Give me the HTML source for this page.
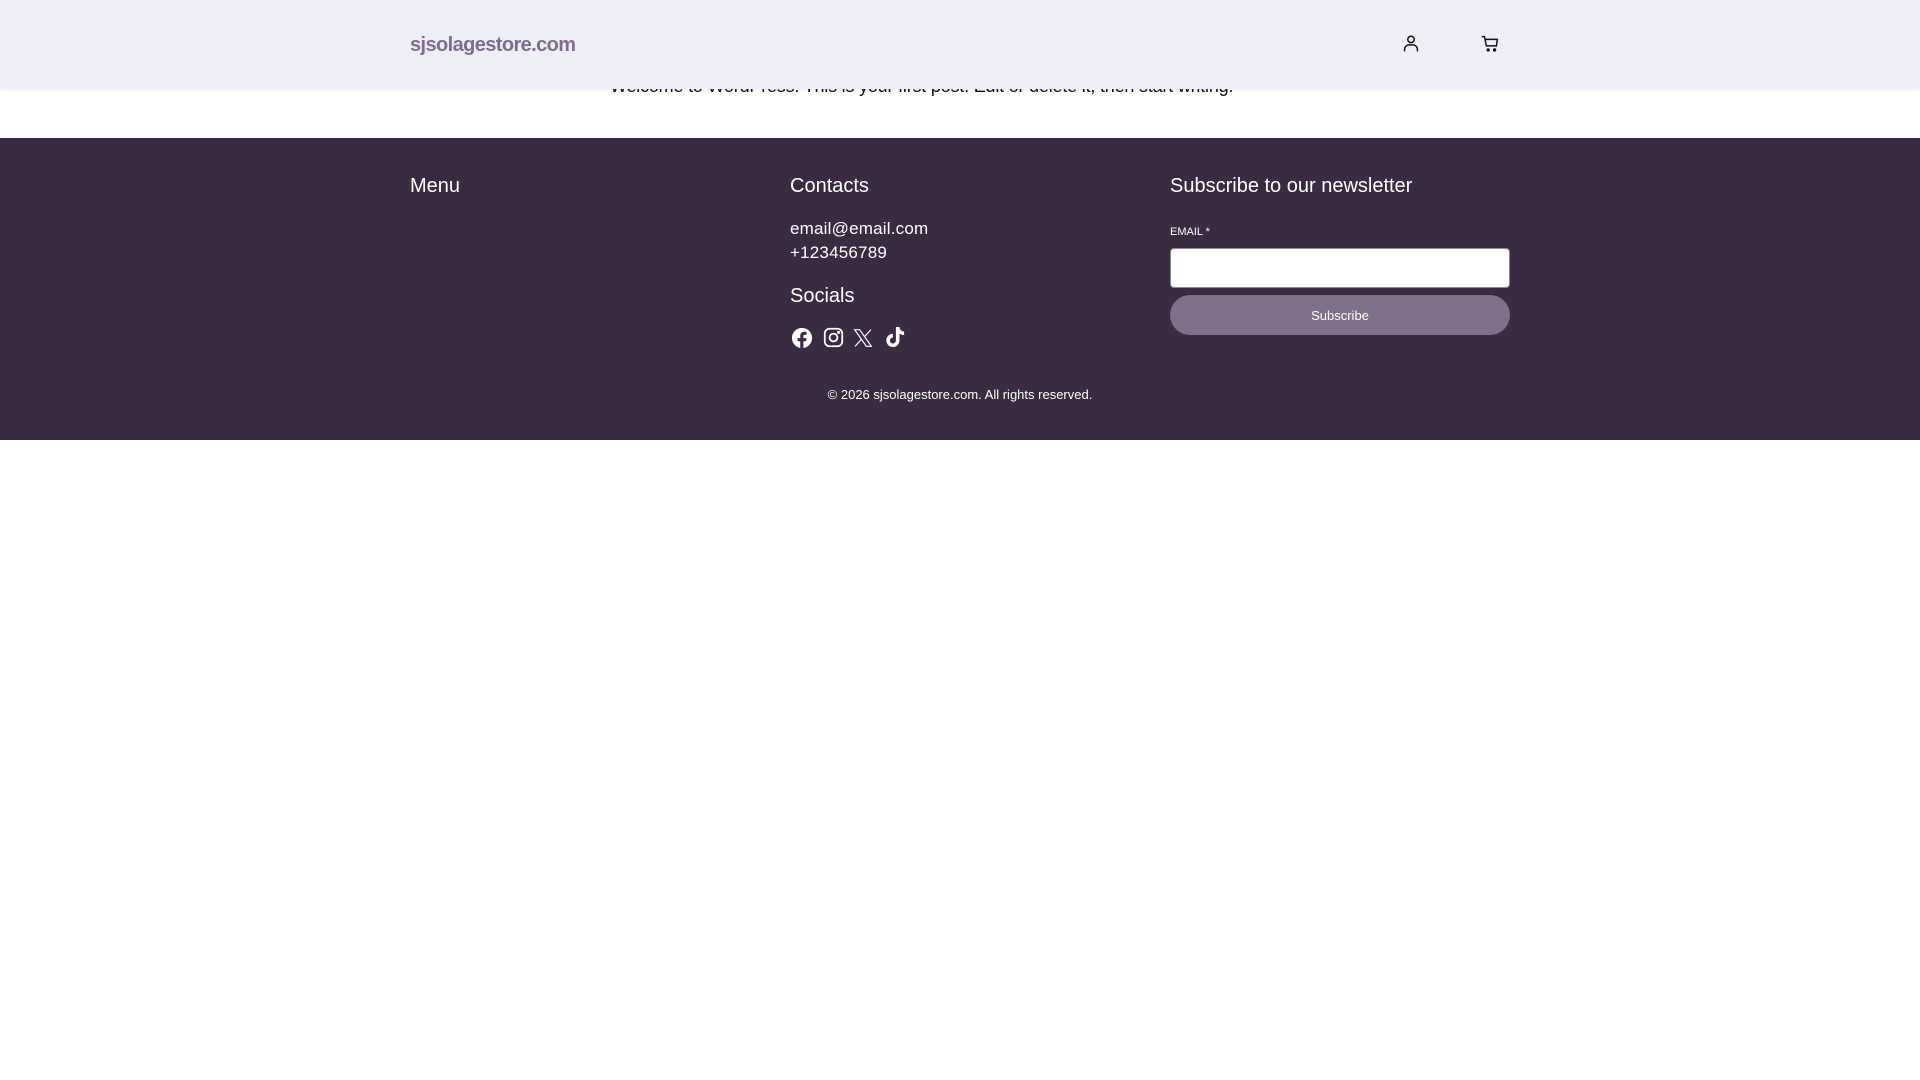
<!DOCTYPE html>
<html><head><meta charset="utf-8"><style>
*{margin:0;padding:0;box-sizing:border-box}
body{width:1920px;height:1080px;background:#fff;font-family:"Liberation Sans",sans-serif;position:relative;overflow:hidden}
.a{position:absolute;white-space:nowrap}
header{position:absolute;left:0;top:0;width:1920px;height:89px;background:#eeeef7;box-shadow:0 1px 3px rgba(0,0,0,.08);z-index:2}
footer{position:absolute;left:0;top:138px;width:1920px;height:302px;background:#3a2b42;color:#fff}
h3{font-weight:normal;font-size:20px;position:absolute;white-space:nowrap}
</style></head><body>
<header>
<div class="a" style="left:410px;top:34px;font-size:20px;font-weight:bold;color:#7f6e8a;letter-spacing:-0.6px">sjsolagestore.com</div>
<svg class="a" style="left:1400px;top:33px" width="22" height="22" viewBox="0 0 24 24" fill="none" stroke="#111" stroke-width="1.6"><circle cx="12" cy="7" r="3.5"/><path d="M5 20v-2a5 5 0 0 1 5-5h4a5 5 0 0 1 5 5v2"/></svg>
<svg class="a" style="left:1479px;top:33px" width="22" height="22" viewBox="0 0 24 24" fill="none" stroke="#111" stroke-width="1.6"><path d="M3 4h3l2 10h11l1-7H7"/><circle cx="10" cy="18.5" r="1" fill="#111"/><circle cx="17" cy="18.5" r="1" fill="#111"/></svg>
</header>
<div class="a" style="left:610px;top:76px;font-size:18px;color:#111;letter-spacing:-0.2px">Welcome to WordPress. This is your first post. Edit or delete it, then start writing!</div>
<footer>
<h3 style="left:410px;top:37px">Menu</h3>
<h3 style="left:790px;top:37px">Contacts</h3>
<div class="a" style="left:790px;top:79px;font-size:17px;line-height:24px;letter-spacing:0.2px">email@email.com<br>+123456789</div>
<h3 style="left:790px;top:147px">Socials</h3>
<svg class="a" style="left:791px;top:189px" width="22" height="22" viewBox="0 0 24 24"><circle cx="12" cy="12" r="11" fill="#fff"/><path d="M13.5 24v-8.5h3l.4-3.4h-3.4V10c0-1 .3-1.6 1.7-1.6h1.8V5.3c-.3 0-1.4-.1-2.6-.1-2.6 0-4.3 1.6-4.3 4.4v2.5H7.2v3.4h2.9V24z" fill="#3a2b42"/></svg>
<svg class="a" style="left:823px;top:189px" width="21" height="21" viewBox="0 0 24 24" fill="none" stroke="#fff" stroke-width="2"><rect x="2" y="2" width="20" height="20" rx="5.5"/><circle cx="12" cy="12" r="4.5"/><circle cx="17.8" cy="6.2" r=".8" fill="#fff"/></svg>
<svg class="a" style="left:853px;top:190px" width="20" height="20" viewBox="0 0 24 24" fill="none" stroke="#fff" stroke-width="1.4"><path d="M2 2h6l14 20h-6z"/><path d="M21.5 2 13.5 11M2.5 22l8-9"/></svg>
<svg class="a" style="left:883px;top:186px" width="24" height="26" viewBox="0 0 24 24"><path d="M16.5 2h-3.6v13.5a3 3 0 1 1-3-3v-3.7a6.6 6.6 0 1 0 6.6 6.6V8.6a8 8 0 0 0 4.6 1.5V6.5a4.6 4.6 0 0 1-4.6-4.5z" fill="#fff"/></svg>
<h3 style="left:1170px;top:37px">Subscribe to our newsletter</h3>
<div class="a" style="left:1170px;top:88px;font-size:11px">EMAIL *</div>
<div class="a" style="left:1170px;top:110px;width:340px;height:40px;background:#fff;border:1px solid #888;border-radius:4px"></div>
<div class="a" style="left:1170px;top:157px;width:340px;height:40px;background:#806f8a;border-radius:20px;text-align:center;line-height:41px;font-size:13px">Subscribe</div>
<div class="a" style="left:0;width:1920px;text-align:center;top:249px;font-size:13px">© 2026 sjsolagestore.com. All rights reserved.</div>
</footer>
</body></html>
